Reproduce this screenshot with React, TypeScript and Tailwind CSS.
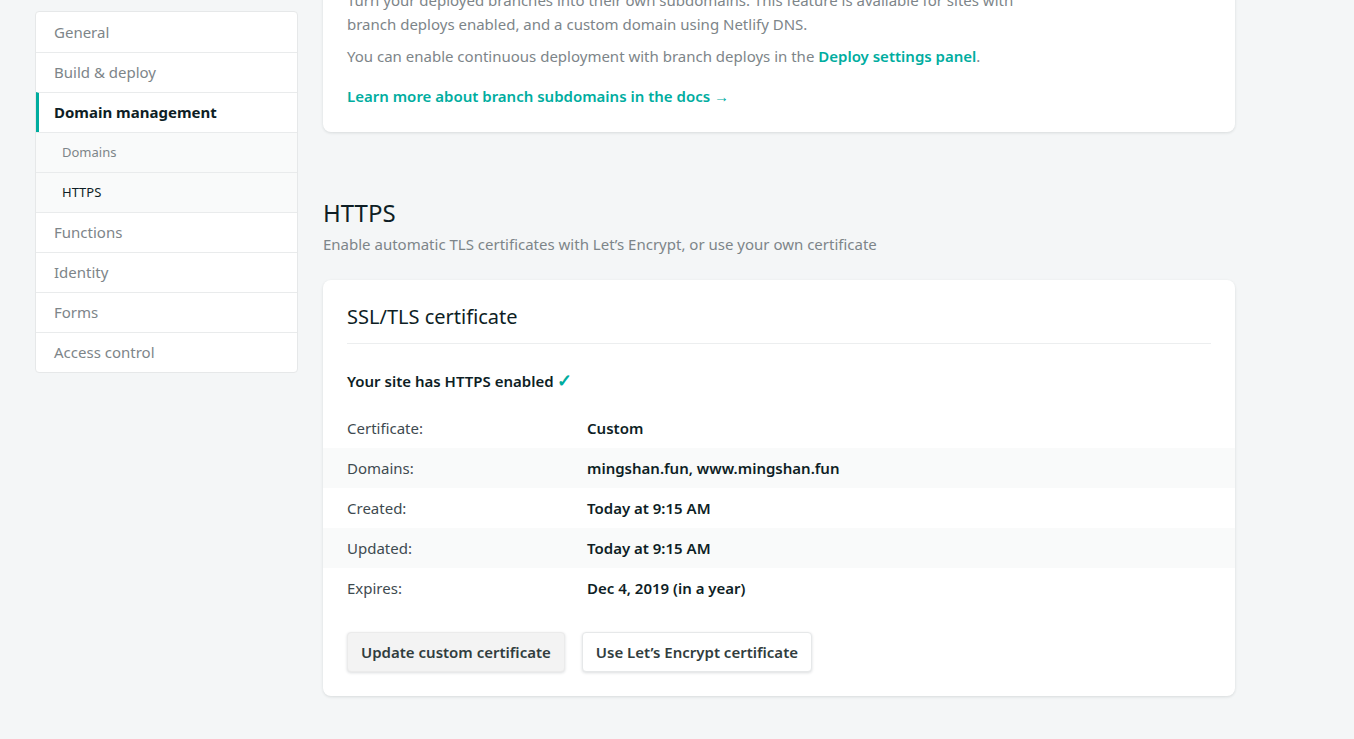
// Netlify-style site settings: Domain management > HTTPS

const font = { fontFamily: '"Noto Sans", "Open Sans", sans-serif' };

const navItems = [
  { label: 'General' },
  { label: 'Build & deploy' },
  { label: 'Domain management', active: true },
  { label: 'Domains', sub: true },
  { label: 'HTTPS', sub: true, current: true },
  { label: 'Functions' },
  { label: 'Identity' },
  { label: 'Forms' },
  { label: 'Access control' },
];

const certRows = [
  { label: 'Certificate:', value: 'Custom' },
  { label: 'Domains:', value: 'mingshan.fun, www.mingshan.fun' },
  { label: 'Created:', value: 'Today at 9:15 AM' },
  { label: 'Updated:', value: 'Today at 9:15 AM' },
  { label: 'Expires:', value: 'Dec 4, 2019 (in a year)' },
];

function navClass(item: (typeof navItems)[number], i: number) {
  const cls = ['h-10 flex items-center'];
  if (i > 0) cls.push('border-t border-[#e9ebec]');
  if (item.active) {
    cls.push('border-l-[3px] border-l-[#00ad9f] pl-[15px] text-[15px] font-bold text-[#0e1e25]');
  } else if (item.sub) {
    cls.push('bg-[#f9fafa] pl-[26px] text-[13px]');
    cls.push(item.current ? 'text-[#0e1e25]' : 'text-[#7d8589]');
  } else {
    cls.push('pl-[18px] text-[15px] text-[#7d8589]');
  }
  return cls.join(' ');
}

function Sidebar() {
  return (
    <nav className="w-[263px] shrink-0 mt-[11px] bg-white border border-[#e6e8e9] rounded-[4px] overflow-hidden">
      {navItems.map((item, i) => (
        <div key={item.label} className={navClass(item, i)}>
          {item.label}
        </div>
      ))}
    </nav>
  );
}

function BranchCard() {
  return (
    <div className="-mt-3 bg-white rounded-b-lg shadow-[0_1px_3px_rgba(14,30,37,0.12)] px-6 pb-6 text-[15px] leading-6 text-[#7d8589]">
      <p>
        <span className="block whitespace-nowrap">
          Turn your deployed branches into their own subdomains. This feature is available for sites with
        </span>
        <span className="block whitespace-nowrap">
          branch deploys enabled, and a custom domain using Netlify DNS.
        </span>
      </p>
      <p className="mt-2">
        You can enable continuous deployment with branch deploys in the{' '}
        <a className="font-semibold text-[#00ad9f]">Deploy settings panel</a>.
      </p>
      <p className="mt-4">
        <a className="font-semibold text-[#00ad9f]">
          Learn more about branch subdomains in the docs <span className="font-normal">→</span>
        </a>
      </p>
    </div>
  );
}

function CertificateCard() {
  return (
    <div className="mt-6 bg-white rounded-lg shadow-[0_1px_3px_rgba(14,30,37,0.12)] pt-[23px] pb-6">
      <div className="mx-6 pb-3 border-b border-[#eceeef]">
        <h3 className="text-[20px] leading-7 text-[#0e1e25]">SSL/TLS certificate</h3>
      </div>
      <p className="mx-6 mt-6 text-[15px] leading-6 font-semibold text-[#0e1e25]">
        Your site has HTTPS enabled <span className="text-[18px] leading-6 font-bold text-[#00ad9f]">✓</span>
      </p>
      <div className="mt-[15px]">
        {certRows.map((row, i) => (
          <div key={row.label} className={`h-10 flex items-center px-6 text-[15px] ${i % 2 === 1 ? 'bg-[#f9fafa]' : ''}`}>
            <span className="w-[240px] text-[#3e4a50]">{row.label}</span>
            <span className="font-semibold text-[#0e1e25]">{row.value}</span>
          </div>
        ))}
      </div>
      <div className="mx-6 mt-6 flex gap-[17px]">
        <button className="h-10 px-[13px] rounded-[4px] bg-[#f3f3f3] border border-[#ebebeb] shadow-[0_1px_3px_rgba(14,30,37,0.15)] text-[15px] font-semibold text-[#313d3e]">
          Update custom certificate
        </button>
        <button className="h-10 px-[13px] rounded-[4px] bg-white border border-[#e6e8e9] shadow-[0_1px_3px_rgba(14,30,37,0.15)] text-[15px] font-semibold text-[#313d3e]">
          Use Let’s Encrypt certificate
        </button>
      </div>
    </div>
  );
}

export default function App() {
  return (
    <div style={font} className="min-h-screen bg-[#f4f6f7] pl-[35px] overflow-hidden">
      <div className="flex gap-[25px] items-start">
        <Sidebar />

        <main className="w-[912px] shrink-0 pb-10">
          <BranchCard />

          {/* HTTPS section */}
          <section className="mt-[65px]">
            <h2 className="text-2xl leading-8 text-[#0e1e25]">HTTPS</h2>
            <p className="mt-[3px] text-[15px] leading-6 text-[#7d8589]">
              Enable automatic TLS certificates with Let’s Encrypt, or use your own certificate
            </p>
            <CertificateCard />
          </section>
        </main>
      </div>
    </div>
  );
}
